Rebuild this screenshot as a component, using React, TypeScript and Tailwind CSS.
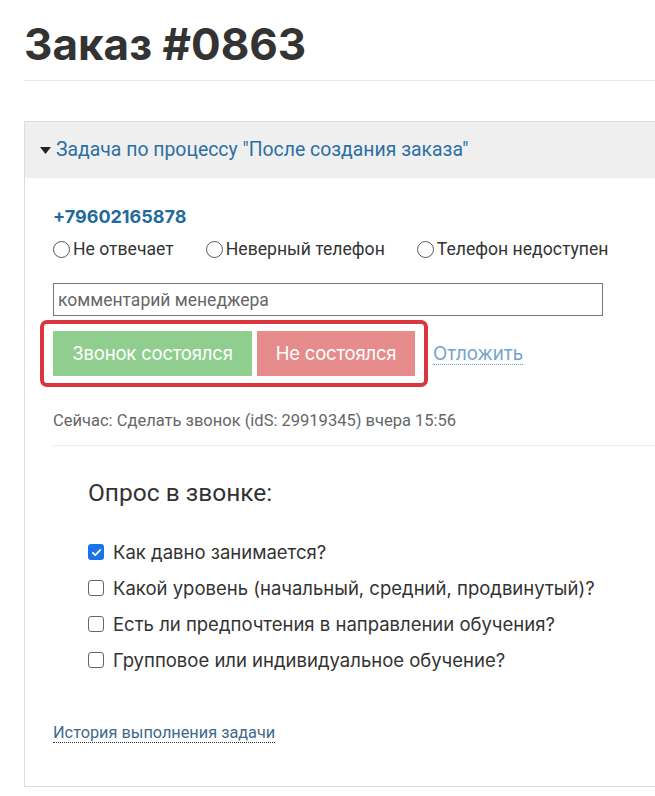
import { useState } from "react";

const questions = [
  { label: "Как давно занимается?", checked: true },
  { label: "Какой уровень (начальный, средний, продвинутый)?", checked: false },
  { label: "Есть ли предпочтения в направлении обучения?", checked: false },
  { label: "Групповое или индивидуальное обучение?", checked: false },
];

const reasons = ["Не отвечает", "Неверный телефон", "Телефон недоступен"];

function Radio({ label }: { label: string }) {
  return (
    <label className="flex items-center gap-[3px] text-[17.6px] text-[#333] font-['Roboto',sans-serif]">
      <span className="w-[17px] h-[17px] rounded-full border border-[#555] bg-white" />
      {label}
    </label>
  );
}

function Checkbox({ checked }: { checked: boolean }) {
  if (checked) {
    return (
      <span className="w-[16px] h-[16px] rounded-[3px] bg-[#1a73e8] flex items-center justify-center shrink-0">
        <svg width="11" height="11" viewBox="0 0 12 12" fill="none">
          <path d="M2 6.3l2.6 2.6L10 3.3" stroke="white" strokeWidth="2" strokeLinecap="round" strokeLinejoin="round" />
        </svg>
      </span>
    );
  }
  return <span className="w-[16px] h-[16px] rounded-[3px] border border-[#666] bg-white shrink-0" />;
}

export default function App() {
  const [comment, setComment] = useState("");

  return (
    <div className="w-[655px] h-[796px] overflow-hidden bg-white font-['Inter',sans-serif] text-[#333]">
      {/* Header */}
      <div className="pl-[24px] pt-[14px]">
        <h1 className="text-[44px] font-bold leading-[60px] text-[#333]">Заказ #0863</h1>
        <div className="mt-[6px] h-px bg-[#e6e6e6]" />
      </div>

      {/* Task panel */}
      <div className="ml-[24px] mt-[40px] w-[700px] h-[666px] border border-[#dcdcdc]">
        <div className="h-[56px] bg-[#efefef] flex items-center pl-[15px] font-['Roboto',sans-serif]">
          <svg width="11" height="7" viewBox="0 0 11 7" className="mr-[5px]">
            <path d="M0 0h11L5.5 7z" fill="#222" />
          </svg>
          <span className="text-[19.4px] text-[#2c6fa3]">Задача по процессу "После создания заказа"</span>
        </div>

        <div className="pl-[28px] pt-[28px]">
          <div className="text-[18px] font-bold text-[#1f6a9c] leading-[22px]">+79602165878</div>
          <div className="flex items-center gap-[32px] mt-[8px]">
            {reasons.map((r) => (
              <Radio key={r} label={r} />
            ))}
          </div>

          <input
            value={comment}
            onChange={(e) => setComment(e.target.value)}
            placeholder="комментарий менеджера"
            className="mt-[21px] w-[550px] h-[33px] border border-[#777] px-[4px] text-[17.5px] font-['Roboto',sans-serif] placeholder:text-[#666] outline-none"
          />

          <div className="flex items-center mt-[4px] -ml-[13px]">
            <div className="border-[4px] border-[#d9363e] rounded-[7px] px-[9px] py-[7px] flex gap-[5px]">
              <button className="w-[199px] h-[45px] bg-[#8fce8f] text-white text-[18.5px] tracking-[-0.2px]">Звонок состоялся</button>
              <button className="w-[158px] h-[45px] bg-[#e68c8c] text-white text-[18.5px] tracking-[-0.2px]">Не состоялся</button>
            </div>
            <a className="ml-[5px] text-[18.7px] text-[#72a3cb] border-b border-dotted border-[#72a3cb] leading-[21px]">
              Отложить
            </a>
          </div>

          <div className="mt-[24px] text-[16.5px] text-[#666] font-['Roboto',sans-serif] leading-[20px]">
            Сейчас: Сделать звонок (idS: 29919345) вчера 15:56
          </div>
          <div className="mt-[14px] h-px bg-[#ececec]" />

          <div className="pl-[35px] pt-[32px]">
            <div className="text-[24.5px] leading-[30px] text-[#333] font-['Roboto',sans-serif]">Опрос в звонке:</div>
            <div className="mt-[26px] flex flex-col">
              {questions.map((q) => (
                <label key={q.label} className="flex items-center h-[36px] gap-[9px] text-[18.5px] text-[#333]">
                  <Checkbox checked={q.checked} />
                  {q.label}
                </label>
              ))}
            </div>
          </div>

          <a className="inline-block mt-[45px] text-[16.3px] text-[#3f6a8e] font-['Roboto',sans-serif] border-b border-dotted border-[#333] leading-[19px]">
            История выполнения задачи
          </a>
        </div>
      </div>
    </div>
  );
}
